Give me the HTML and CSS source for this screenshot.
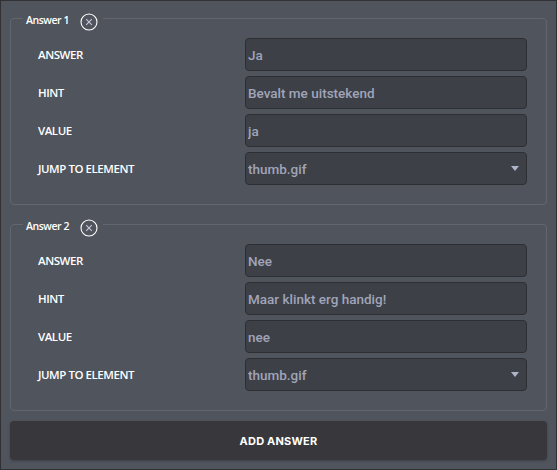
FILE: index.html
```
<!DOCTYPE html>
<html lang="nl">
<head>
  <meta charset="UTF-8" />
  <meta name="viewport" content="width=device-width, initial-scale=1.0" />
  <title>Answers</title>
  <link rel="stylesheet" href="styles.css">
</head>
<body>
  <form class="panel">
    <fieldset class="answer">
      <legend>
        <span class="title">Answer 1</span>
        <button type="button" class="remove" aria-label="Remove answer 1">
          <svg width="18" height="18" viewBox="0 0 18 18"><circle cx="9" cy="9" r="8" /><path d="M6.2 6.2l5.6 5.6M11.8 6.2l-5.6 5.6" /></svg>
        </button>
      </legend>
      <label class="row"><span class="name">ANSWER</span><input type="text" value="Ja"></label>
      <label class="row"><span class="name">HINT</span><input type="text" value="Bevalt me uitstekend"></label>
      <label class="row"><span class="name">VALUE</span><input type="text" value="ja"></label>
      <label class="row">
        <span class="name">JUMP TO ELEMENT</span>
        <span class="select">
          <select><option>thumb.gif</option></select>
          <svg class="arrow" width="8" height="5" viewBox="0 0 8 5"><path d="M0 0h8L4 5z" /></svg>
        </span>
      </label>
    </fieldset>

    <fieldset class="answer">
      <legend>
        <span class="title">Answer 2</span>
        <button type="button" class="remove" aria-label="Remove answer 2">
          <svg width="18" height="18" viewBox="0 0 18 18"><circle cx="9" cy="9" r="8" /><path d="M6.2 6.2l5.6 5.6M11.8 6.2l-5.6 5.6" /></svg>
        </button>
      </legend>
      <label class="row"><span class="name">ANSWER</span><input type="text" value="Nee"></label>
      <label class="row"><span class="name">HINT</span><input type="text" value="Maar klinkt erg handig!"></label>
      <label class="row"><span class="name">VALUE</span><input type="text" value="nee"></label>
      <label class="row">
        <span class="name">JUMP TO ELEMENT</span>
        <span class="select">
          <select><option>thumb.gif</option></select>
          <svg class="arrow" width="8" height="5" viewBox="0 0 8 5"><path d="M0 0h8L4 5z" /></svg>
        </span>
      </label>
    </fieldset>

    <button type="button" class="add">ADD ANSWER</button>
  </form>
</body>
</html>
```
FILE: styles.css
```
* {
  box-sizing: border-box;
}
body {
  margin: 0;
  font-family: "Open Sans", sans-serif;
  color: #fff;
}
.panel {
  height: 470px;
  padding: 5px 9px;
  background-color: #50545d;
  border: 1px solid #303035;
}
.answer {
  height: 199px;
  margin: 0 0 7px;
  padding: 7px 19px 0 27px;
  border: 1px solid #62666f;
  border-radius: 4px;
}
legend {
  display: flex;
  align-items: flex-end;
  height: 25px;
  margin-left: -15px;
  padding: 0 5px 0 3px;
}
.title {
  width: 54px;
  font-size: 10.5px;
  font-weight: 600;
  letter-spacing: -0.45px;
  line-height: 14px;
  padding-bottom: 4px;
  height: 18px;
  white-space: nowrap;
}
.remove {
  width: 18px;
  height: 18px;
  padding: 0;
  background: none;
  border: none;
  cursor: pointer;
}
.remove svg {
  display: block;
  fill: none;
  stroke: #fff;
  stroke-width: 1.1;
}
.remove path {
  stroke: #c6cad8;
}
.row {
  display: flex;
  align-items: center;
  justify-content: space-between;
  height: 33px;
  margin-bottom: 5px;
}
.name {
  font-size: 11.5px;
  font-weight: 600;
  letter-spacing: -0.45px;
}
input,
select {
  display: block;
  width: 282px;
  height: 33px;
  margin: 0;
  padding: 0 2px;
  font-family: Roboto, sans-serif;
  font-size: 13.5px;
  font-weight: 500;
  color: #a0a5b9;
  background-color: #3d4047;
  border: 1px solid #2e2f32;
  border-radius: 4px;
  outline: none;
}
select {
  appearance: none;
}
.select {
  position: relative;
}
.arrow {
  position: absolute;
  top: 14px;
  right: 8px;
  fill: #aeb4cb;
  pointer-events: none;
}
.add {
  display: block;
  width: 100%;
  height: 39px;
  margin-top: 10px;
  font-family: Inter, sans-serif;
  font-size: 11px;
  font-weight: 700;
  letter-spacing: 0.2px;
  color: #fff;
  background-color: #38383c;
  border: none;
  border-radius: 4px;
  box-shadow: 0 1px 3px rgba(0, 0, 0, 0.25);
  cursor: pointer;
}
```
